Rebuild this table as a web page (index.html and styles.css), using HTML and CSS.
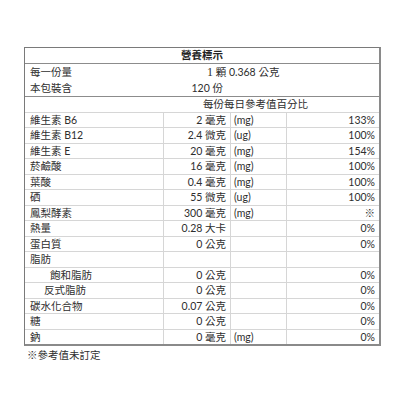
FILE: index.html
```
<!DOCTYPE html>
<html lang="zh-Hant">
<head>
<meta charset="utf-8">
<title>營養標示</title>
<link rel="stylesheet" href="styles.css">
</head>
<body>
<div class="label">
  <div class="row title">營養標示</div>
  <div class="row meta"><span class="name">每一份量</span><span class="serving"><span class="one">1</span> 顆 0.368 公克</span></div>
  <div class="row meta sep"><span class="name">本包裝含</span><span class="count">120 份</span></div>
  <div class="row head">每份每日參考值百分比</div>

  <div class="grid">
    <div class="c n">維生素 B6</div><div class="c v">2 毫克</div><div class="c u">(mg)</div><div class="c p">133%</div>
    <div class="c n">維生素 B12</div><div class="c v">2.4 微克</div><div class="c u">(ug)</div><div class="c p">100%</div>
    <div class="c n">維生素 E</div><div class="c v">20 毫克</div><div class="c u">(mg)</div><div class="c p">154%</div>
    <div class="c n">菸鹼酸</div><div class="c v">16 毫克</div><div class="c u">(mg)</div><div class="c p">100%</div>
    <div class="c n">葉酸</div><div class="c v">0.4 毫克</div><div class="c u">(mg)</div><div class="c p">100%</div>
    <div class="c n">硒</div><div class="c v">55 微克</div><div class="c u">(ug)</div><div class="c p">100%</div>
    <div class="c n">鳳梨酵素</div><div class="c v">300 毫克</div><div class="c u">(mg)</div><div class="c p">※</div>
    <div class="c n">熱量</div><div class="c v">0.28 大卡</div><div class="c u"></div><div class="c p">0%</div>
    <div class="c n">蛋白質</div><div class="c v">0 公克</div><div class="c u"></div><div class="c p">0%</div>
    <div class="c n">脂肪</div><div class="c v"></div><div class="c u"></div><div class="c p"></div>
    <div class="c n ind1">飽和脂肪</div><div class="c v">0 公克</div><div class="c u"></div><div class="c p">0%</div>
    <div class="c n ind2">反式脂肪</div><div class="c v">0 公克</div><div class="c u"></div><div class="c p">0%</div>
    <div class="c n">碳水化合物</div><div class="c v">0.07 公克</div><div class="c u"></div><div class="c p">0%</div>
    <div class="c n">糖</div><div class="c v">0 公克</div><div class="c u"></div><div class="c p">0%</div>
    <div class="c n last">鈉</div><div class="c v last">0 毫克</div><div class="c u last">(mg)</div><div class="c p last">0%</div>
  </div>
</div>
<p class="note">※參考值未訂定</p>
</body>
</html>
```
FILE: styles.css
```
html, body {
  margin: 0;
  padding: 0;
  background: #ffffff;
}

body {
  font-family: "Lato", "Noto Sans CJK TC", sans-serif;
  font-size: 10.5px;
  color: #2e2e2e;
}

.label {
  margin: 47px 0 0 24px;
  width: 357px;
  box-sizing: border-box;
  border-top: 1px solid #7a7a7a;
  border-left: 1px solid #7a7a7a;
  border-right: 2px solid #8a8a8a;
  border-bottom: 2px solid #8a8a8a;
}

.row {
  display: flex;
  align-items: center;
  box-sizing: border-box;
  line-height: 1;
}

.title {
  height: 16px;
  justify-content: center;
  font-weight: bold;
  color: #222;
  border-bottom: 1px solid #8c8c8c;
}

.meta {
  height: 16px;
}

.meta.sep {
  height: 17px;
  border-bottom: 1px solid #8c8c8c;
}

.name {
  width: 139px;
  padding-left: 5px;
  box-sizing: border-box;
  flex: none;
}

.serving {
  padding-left: 43px;
}

.one {
  font-family: "Liberation Serif", serif;
  font-size: 12px;
}

.count {
  width: 67px;
  text-align: right;
  padding-right: 8px;
  box-sizing: border-box;
}

.head {
  height: 16px;
  padding-left: 178px;
  border-bottom: 1px solid #d6d6d6;
}

.grid {
  display: grid;
  grid-template-columns: 139px 67px 56px 92px;
  grid-template-rows: 15px 16px 15px 16px 15px 16px 15px 16px 15px 16px 15px 16px 15px 16px 14px;
}

.c {
  display: flex;
  align-items: center;
  box-sizing: border-box;
  border-bottom: 1px solid #d6d6d6;
  line-height: 1;
  white-space: nowrap;
}

.c.last {
  border-bottom: none;
}

.n {
  padding-left: 5px;
  border-right: 1px solid #d6d6d6;
}

.n.ind1 {
  padding-left: 25px;
}

.n.ind2 {
  padding-left: 19px;
}

.v {
  justify-content: flex-end;
  padding-right: 4px;
  border-right: 1px solid #d6d6d6;
}

.u {
  padding-left: 3px;
  border-right: 1px solid #d6d6d6;
}

.p {
  justify-content: flex-end;
  padding-right: 4px;
}

.note {
  margin: 2px 0 0 27px;
  font-size: 10.5px;
  line-height: 14px;
}
```
